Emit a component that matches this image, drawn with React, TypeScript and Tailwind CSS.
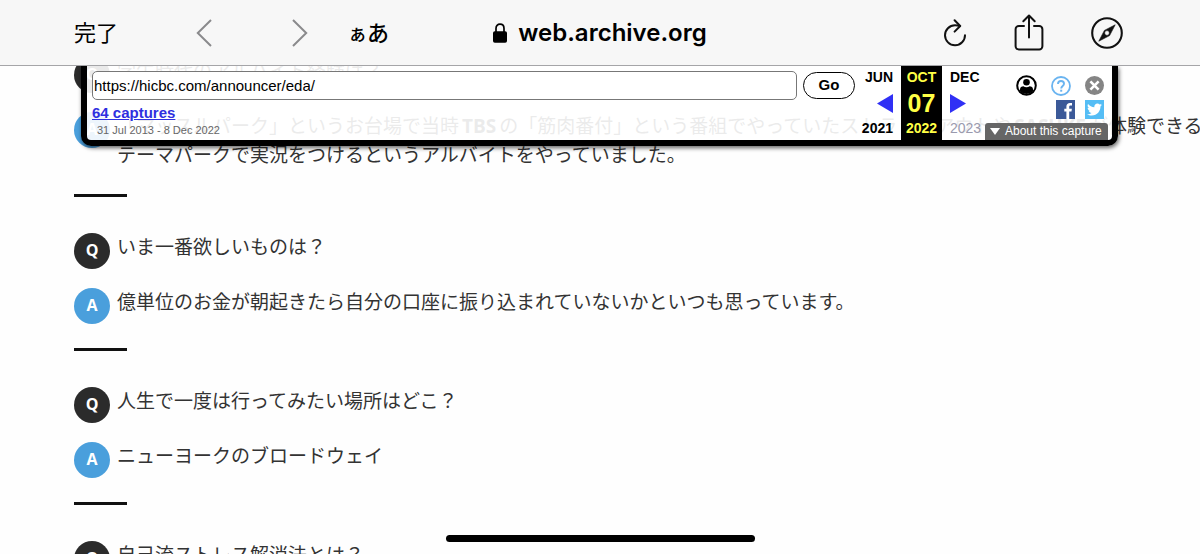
import type { ReactNode } from "react";
import { FaTwitter } from "react-icons/fa6";

function Chevron({ direction }: { direction: "left" | "right" }) {
  return (
    <svg className="block" width="16" height="28" viewBox="0 0 16 28" fill="none" stroke="#8a8a8c" strokeWidth="2">
      <path d={direction === "left" ? "M15 1 1.8 14 15 27" : "M1 1l13.2 13L1 27"} />
    </svg>
  );
}

function LockIcon() {
  return (
    <svg width="14" height="20" viewBox="0 0 14 20" fill="none">
      <rect x="0" y="8.3" width="14" height="11.4" rx="1.8" fill="#000" />
      <path d="M3 9V5.4C3 2.8 4.6 1.2 7 1.2s4 1.6 4 4.2V9" stroke="#000" strokeWidth="1.7" />
    </svg>
  );
}

function ReloadIcon() {
  return (
    <svg width="24" height="28" viewBox="0 0 24 28" fill="none" stroke="#111" strokeWidth="2" strokeLinecap="round" strokeLinejoin="round">
      <path d="M22 16.2A10 10 0 1 1 12 6.3c1.6 0 3.1.2 4.6.8" />
      <path d="M11.6 1.2l5.6 5.8-5.6 5.6" />
    </svg>
  );
}

function ShareIcon() {
  return (
    <svg width="30" height="37" viewBox="0 0 30 37" fill="none" stroke="#111" strokeWidth="2" strokeLinecap="round" strokeLinejoin="round">
      <path d="M10 12H4.8A3.2 3.2 0 0 0 1.6 15.2v17A3.2 3.2 0 0 0 4.8 35.4h20.4a3.2 3.2 0 0 0 3.2-3.2v-17A3.2 3.2 0 0 0 25.2 12H20" />
      <path d="M15 23.5V1.5M9.3 7.2 15 1.5l5.7 5.7" />
    </svg>
  );
}

function CompassIcon() {
  return (
    <svg width="32" height="32" viewBox="0 0 32 32" fill="none">
      <circle cx="16" cy="16" r="14.8" stroke="#111" strokeWidth="2.1" />
      <path fillRule="evenodd" d="M24.200 7.800 18.600 18.600 7.800 24.200 13.400 13.400ZM16 13.600a2.400 2.400 0 1 0 0 4.800 2.400 2.400 0 0 0 0-4.800Z" fill="#111" stroke="#111" strokeWidth="0.6" strokeLinejoin="round" />
    </svg>
  );
}

function UserIcon() {
  return (
    <svg width="21" height="21" viewBox="0 0 21 21">
      <circle cx="10.5" cy="10.5" r="9.3" fill="#fff" stroke="#000" strokeWidth="2" />
      <circle cx="10.5" cy="7.3" r="3.3" />
      <path d="M4 16.200v-1.700c0-2 1.500-3.200 3.500-3.200.8.600 1.800 1 3 1s2.200-.4 3-1c2 0 3.500 1.200 3.500 3.200v1.700a9 9 0 0 1-13 0Z" />
    </svg>
  );
}

function HelpIcon() {
  return (
    <svg width="20" height="20" viewBox="0 0 20 20" fill="none" stroke="#6ab4f0">
      <circle cx="10" cy="10" r="9" strokeWidth="1.8" />
      <path d="M7 8c0-1.900 1.200-3 3-3s3 1.100 3 2.700c0 2.200-2.800 2.300-2.800 4.800" strokeWidth="1.9" />
      <path d="M10.200 13.700v2" strokeWidth="2" />
    </svg>
  );
}

function CloseIcon() {
  return (
    <svg width="19" height="19" viewBox="0 0 19 19">
      <circle cx="9.5" cy="9.5" r="9.5" fill="#858585" />
      <path d="M5.400 5.400l8.200 8.200M13.600 5.400l-8.200 8.200" stroke="#fff" strokeWidth="2.6" />
    </svg>
  );
}

function FacebookIcon() {
  return (
    <svg width="19" height="19" viewBox="0 0 19 19">
      <path fill="#3b5998" d="M0 0h19v19H0z" />
      <path fill="#fff" d="M10.400 19v-7.400H8.300V8.800h2.100V6.600c0-2.300 1.400-3.600 3.500-3.600.9 0 1.800.1 2.100.1v2.500h-1.400c-1.100 0-1.400.6-1.400 1.300v1.900h2.700l-.4 2.800h-2.300V19z" />
    </svg>
  );
}

function Arrow({ direction }: { direction: "left" | "right" }) {
  return (
    <svg className="block" width="16" height="19" viewBox="0 0 16 19">
      <path fill="#3030f5" d={direction === "left" ? "M16 0v19L0 9.500z" : "M0 0v19l16-9.500z"} />
    </svg>
  );
}

function Latin({ children }: { children: ReactNode }) {
  return <b className="px-[3px] font-['Open_Sans',sans-serif] leading-none">{children}</b>;
}

function Row({ kind, children }: { kind: "Q" | "A"; children: ReactNode }) {
  return (
    <div className="flex items-start gap-[7px]">
      <span
        className={
          "mt-[2px] flex size-9 shrink-0 items-center justify-center rounded-full pb-[3px] font-['Open_Sans',sans-serif] text-base leading-none font-bold text-white " +
          (kind === "Q" ? "bg-[#2b2b2b]" : "bg-[#4a9fdc]")
        }
      >
        {kind}
      </span>
      <p className="pb-[2px] text-[19px] leading-[29px] whitespace-nowrap text-[#333]">{children}</p>
    </div>
  );
}

function Entry({ question, children }: { question: string; children: ReactNode }) {
  return (
    <section className="mb-[34px]">
      <Row kind="Q">{question}</Row>
      <div className="h-[17px]" />
      <Row kind="A">{children}</Row>
      <hr className="mt-6 h-[3px] w-[53px] border-0 bg-[#111]" />
    </section>
  );
}

function BrowserBar() {
  return (
    <header className="grid h-[66px] shrink-0 grid-cols-[1fr_auto_1fr] items-center border-b border-[#a5a5a8] bg-[#f7f7f7] px-[74px] text-black">
      <div className="flex items-center">
        <button className="pb-1 text-[22px] leading-8">完了</button>
        <button aria-label="戻る" className="ml-[78px]"><Chevron direction="left" /></button>
        <button aria-label="進む" className="ml-20"><Chevron direction="right" /></button>
        <button className="ml-10 flex items-baseline pb-[2px] font-medium">
          <span className="text-[19px] leading-8">ぁ</span>
          <span className="text-[22px] leading-8">あ</span>
        </button>
      </div>
      <div className="flex items-center gap-[11px]">
        <LockIcon />
        <span className="font-['Inter',sans-serif] text-[24px] leading-8 font-semibold">web.archive.org</span>
      </div>
      <div className="flex items-center justify-end gap-[47px] pr-[3px]">
        <button aria-label="再読み込み"><ReloadIcon /></button>
        <button aria-label="共有"><ShareIcon /></button>
        <button aria-label="Safariで開く"><CompassIcon /></button>
      </div>
    </header>
  );
}

function ArchivePanel() {
  return (
    <aside className="absolute top-0 right-[82px] left-[81px] flex h-20 rounded-b-[10px] border-x-[6px] border-b-[6px] border-black bg-white/90 font-['Liberation_Sans',Arial,sans-serif] text-black shadow-[1px_2px_4px_rgba(0,0,0,0.6)]">
      <div className="flex-1 pt-[5px] pl-[5px]">
        <form className="flex items-center gap-[6px]" onSubmit={(e) => e.preventDefault()}>
          <input
            aria-label="URL"
            defaultValue="https://hicbc.com/announcer/eda/"
            className="h-[29px] min-w-0 flex-1 rounded-[5px] border border-[#777] bg-white px-px text-[15px] outline-none"
          />
          <button className="h-[27px] w-[52px] rounded-full border border-black bg-white text-[15px] font-bold">Go</button>
        </form>
        <a href="#captures" className="mt-1 block text-[15px] leading-[17px] font-bold text-[#2f2fe0] underline">64 captures</a>
        <p className="pl-[5px] text-[11px] leading-[18px] text-[#666]">31 Jul 2013 - 8 Dec 2022</p>
      </div>
      <div className="flex text-[14px] font-bold">
        <div className="flex w-[46px] flex-col items-end justify-between pt-[2px] pr-2 pb-[2px] leading-[19px]">
          <span>JUN</span>
          <a href="#previous" aria-label="Previous capture"><Arrow direction="left" /></a>
          <span>2021</span>
        </div>
        <div className="flex w-[41px] flex-col items-center justify-between bg-black pt-[2px] pb-[2px] leading-[19px] text-[#ffff45]">
          <span>OCT</span>
          <span className="text-[25px] leading-[30px]">07</span>
          <span>2022</span>
        </div>
        <div className="flex w-[43px] flex-col items-start justify-between pt-[2px] pb-[2px] pl-2 leading-[19px]">
          <span>DEC</span>
          <a href="#next" aria-label="Next capture"><Arrow direction="right" /></a>
          <span className="font-normal text-[#9a9aae]">2023</span>
        </div>
      </div>
      <div className="flex w-[127px] flex-col justify-between">
        <div className="flex flex-col items-end gap-1 pt-[9px] pr-2">
          <div className="flex gap-[14px]">
            <button aria-label="Account"><UserIcon /></button>
            <button aria-label="Help"><HelpIcon /></button>
            <button aria-label="Close"><CloseIcon /></button>
          </div>
          <div className="flex gap-[10px]">
            <a href="#facebook" aria-label="Facebook"><FacebookIcon /></a>
            <a href="#twitter" aria-label="Twitter" className="flex size-[19px] items-center justify-center bg-[#55bdf5] text-white">
              <FaTwitter size={15} />
            </a>
          </div>
        </div>
        <button className="mr-1 flex h-[17px] items-center gap-[5px] rounded-t-[3px] bg-[#666] pl-[5px] text-[12px] leading-[17px] whitespace-nowrap text-white">
          <svg width="10" height="7" viewBox="0 0 10 7"><path fill="#fff" d="M0 0h10L5 7z" /></svg>
          About this capture
        </button>
      </div>
    </aside>
  );
}

export default function App() {
  return (
    <div lang="ja" className="relative flex h-screen flex-col bg-[#fefefe] font-['Noto_Sans_CJK_JP',sans-serif]">
      <BrowserBar />
      <main className="relative flex-1 overflow-hidden">
        <div className="-mt-[11px] pl-[74px]">
          <Entry question="学生時代のアルバイト経験は？">
            「マッスルパーク」というお台場で当時<Latin>TBS</Latin>の「筋肉番付」という番組でやっていたストラックアウトや<Latin>SASUKE</Latin>が体験できる
            <br />
            テーマパークで実況をつけるというアルバイトをやっていました。
          </Entry>
          <Entry question="いま一番欲しいものは？">
            億単位のお金が朝起きたら自分の口座に振り込まれていないかといつも思っています。
          </Entry>
          <Entry question="人生で一度は行ってみたい場所はどこ？">ニューヨークのブロードウェイ</Entry>
          <Row kind="Q">自己流ストレス解消法とは？</Row>
        </div>
        <ArchivePanel />
      </main>
      <div className="absolute inset-x-0 bottom-3 flex justify-center">
        <div className="h-[7px] w-[309px] rounded-full bg-black" />
      </div>
    </div>
  );
}
